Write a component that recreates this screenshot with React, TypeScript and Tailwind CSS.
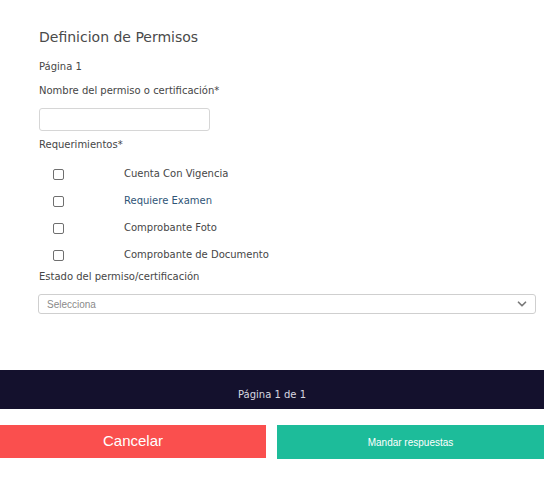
import { ChevronDown } from 'lucide-react';

const requerimientos = [
  'Cuenta Con Vigencia',
  'Requiere Examen',
  'Comprobante Foto',
  'Comprobante de Documento',
];

export default function App() {
  return (
    <div className="w-[550px] h-[480px] bg-white font-['DejaVu_Sans',sans-serif] text-[#464646]">
      <div className="pl-[39px] pr-[14px] pt-[28px]">
        <h1 className="text-[14px] leading-[18px] text-[#4a4a4a]">Definicion de Permisos</h1>
        <p className="mt-[15px] text-[10px] leading-[12px]">Página 1</p>
        <label className="block mt-[12px] text-[10px] leading-[12px]">
          Nombre del permiso o certificación*
        </label>
        <input
          type="text"
          className="block mt-[11px] w-[171px] h-[23px] border border-[#d6d6d6] rounded-[3px] outline-none"
        />
        <label className="block mt-[8px] text-[10px] leading-[12px]">Requerimientos*</label>

        <div className="mt-[17px] flex flex-col gap-[15px]">
          {requerimientos.map((r, i) => (
            <div key={r} className="flex items-center h-[12px]">
              <span className="ml-[14px] w-[11px] h-[11px] border border-[#6f6f6f] rounded-[2px]" />
              <span
                className={`ml-[60px] text-[10px] leading-[12px] ${
                  i === 1 ? 'text-[#2f5577]' : 'text-[#464646]'
                }`}
              >
                {r}
              </span>
            </div>
          ))}
        </div>

        <label className="block mt-[10px] text-[10px] leading-[12px]">
          Estado del permiso/certificación
        </label>
        <div className="mt-[11px] -ml-px h-[20px] border border-[#cfcfcf] rounded-[3px] flex items-center justify-between pl-[8px] pr-[6px]">
          <span className="font-['Liberation_Sans',sans-serif] text-[10px] text-[#8a8a8a]">Selecciona</span>
          <ChevronDown className="w-[14px] h-[14px] text-[#7a7a7a]" strokeWidth={3} />
        </div>
      </div>

      <div className="mt-[56px] w-[544px] h-[39px] bg-[#14112d] flex items-end justify-center pb-[8px]">
        <span className="text-[10px] leading-[12px] text-[#d8d8e0]">Página 1 de 1</span>
      </div>

      <div className="mt-[16px] w-[544px] flex gap-[11px]">
        <button className="w-[266px] h-[33px] bg-[#fa4f4e] text-white text-[15px] font-['Liberation_Sans',sans-serif]">
          Cancelar
        </button>
        <button className="w-[267px] h-[34px] bg-[#1dbc9a] text-white text-[10px] font-['Liberation_Sans',sans-serif]">
          Mandar respuestas
        </button>
      </div>
    </div>
  );
}
